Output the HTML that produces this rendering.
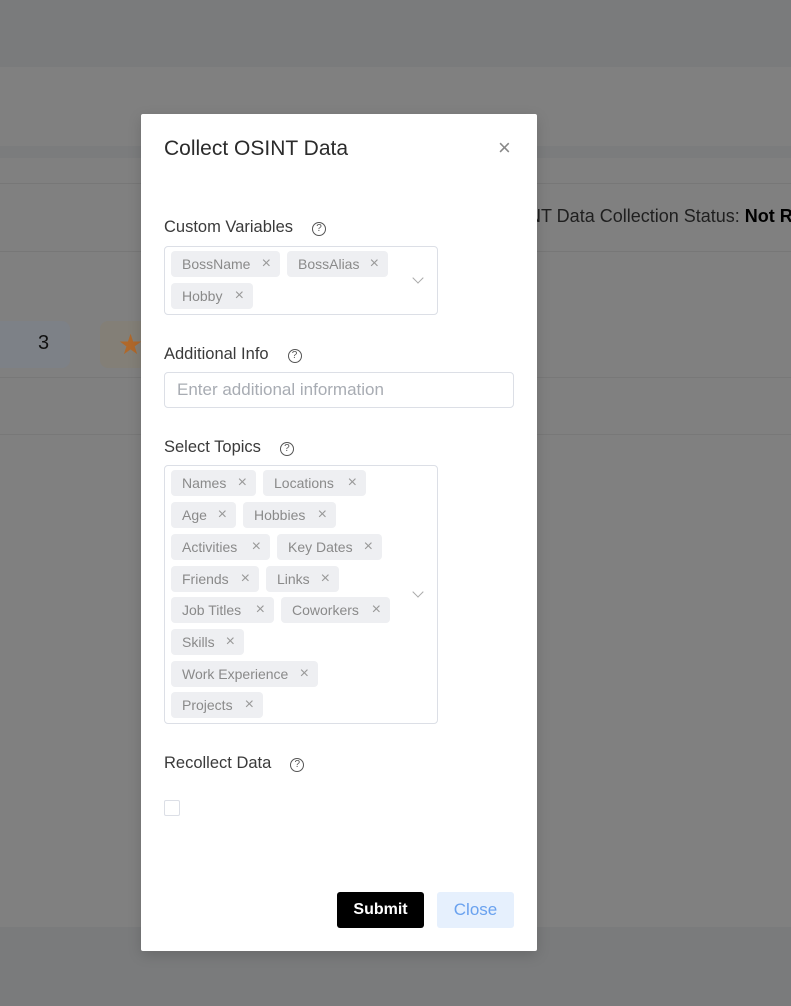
<!DOCTYPE html>
<html><head><meta charset="utf-8"><style>
*{box-sizing:border-box;margin:0;padding:0}
body{width:791px;height:1006px;position:relative;overflow:hidden;background:#808080;font-family:"Liberation Sans",Arial,sans-serif}
.a{position:absolute}
.tag{position:absolute;height:26px;background:#eeeff2;border-radius:4px;color:#8a8a8a;font-size:14px;line-height:26px;padding-left:11px;white-space:nowrap}
.tag i{position:absolute;right:9px;top:0;font-style:normal;font-size:16px;color:#999}
.lbl{position:absolute;left:164px;font-size:16.5px;color:#3a3a3a;white-space:nowrap}
.q{display:inline-block;width:14px;height:14px;border:1.2px solid #555;border-radius:50%;font-size:10px;line-height:12px;text-align:center;color:#555;margin-left:19px;vertical-align:1px}
.box{position:absolute;border:1px solid #dcdfe6;border-radius:4px;background:#fff}
.chev{position:absolute;width:8px;height:8px;border-right:1.2px solid #aaa;border-bottom:1.2px solid #aaa;transform:rotate(45deg)}
</style></head><body>
<div class="a" style="left:0;top:0;width:791px;height:67px;background:#7a7b7c"></div>
<div class="a" style="left:0;top:146px;width:791px;height:12px;background:#7b7c7d"></div>
<div class="a" style="left:0;top:183px;width:791px;height:1px;background:#777"></div>
<div class="a" style="left:0;top:251px;width:791px;height:1px;background:#777"></div>
<div class="a" style="left:0;top:377px;width:791px;height:1px;background:#787878"></div>
<div class="a" style="left:0;top:434px;width:791px;height:1px;background:#787878"></div>
<div class="a" style="left:0;top:927px;width:791px;height:79px;background:#7a7b7c"></div>
<div class="a" style="left:-10px;top:321px;width:80px;height:47px;background:#7d8187;border-radius:8px"></div>
<div class="a" style="left:38px;top:332px;font-size:20px;color:#111">3</div>
<div class="a" style="left:100px;top:321px;width:60px;height:47px;background:#837f77;border-radius:8px"></div>
<div class="a" style="left:118px;top:328px;font-size:28px;color:#b0682a">★</div>
<div class="a" style="left:497px;top:206px;font-size:18px;color:#1f1f1f;white-space:nowrap">OSINT Data Collection Status: <b style="color:#000">Not Run</b></div>

<div class="a" style="left:141px;top:114px;width:396px;height:837px;background:#fff;border-radius:2px;box-shadow:0 4px 14px rgba(0,0,0,.15)"></div>
<div class="a" style="left:164px;top:137px;font-size:21px;color:#2b2b2b">Collect OSINT Data</div>
<div class="a" style="left:498px;top:135px;font-size:22px;color:#888;font-weight:300">×</div>

<div class="lbl" style="top:218px">Custom Variables<span class="q">?</span></div>
<div class="box" style="left:164px;top:246px;width:274px;height:69px"></div>
<div class="tag" style="left:171px;top:251px;width:109px">BossName<i>×</i></div>
<div class="tag" style="left:287px;top:251px;width:101px">BossAlias<i>×</i></div>
<div class="tag" style="left:171px;top:283px;width:82px">Hobby<i>×</i></div>
<div class="chev" style="left:414px;top:274px"></div>

<div class="lbl" style="top:345px">Additional Info<span class="q">?</span></div>
<div class="box" style="left:164px;top:372px;width:350px;height:36px"></div>
<div class="a" style="left:177px;top:380px;font-size:17px;color:#a8acb3">Enter additional information</div>

<div class="lbl" style="top:438px">Select Topics<span class="q">?</span></div>
<div class="box" style="left:164px;top:465px;width:274px;height:259px"></div>
<div class="tag" style="left:171px;top:470px;width:85px">Names<i>×</i></div>
<div class="tag" style="left:263px;top:470px;width:103px">Locations<i>×</i></div>
<div class="tag" style="left:171px;top:502px;width:65px">Age<i>×</i></div>
<div class="tag" style="left:243px;top:502px;width:93px">Hobbies<i>×</i></div>
<div class="tag" style="left:171px;top:534px;width:99px">Activities<i>×</i></div>
<div class="tag" style="left:277px;top:534px;width:105px">Key Dates<i>×</i></div>
<div class="tag" style="left:171px;top:566px;width:88px">Friends<i>×</i></div>
<div class="tag" style="left:266px;top:566px;width:73px">Links<i>×</i></div>
<div class="tag" style="left:171px;top:597px;width:103px">Job Titles<i>×</i></div>
<div class="tag" style="left:281px;top:597px;width:109px">Coworkers<i>×</i></div>
<div class="tag" style="left:171px;top:629px;width:73px">Skills<i>×</i></div>
<div class="tag" style="left:171px;top:661px;width:147px">Work Experience<i>×</i></div>
<div class="tag" style="left:171px;top:692px;width:92px">Projects<i>×</i></div>
<div class="chev" style="left:414px;top:588px"></div>

<div class="lbl" style="top:754px">Recollect Data<span class="q">?</span></div>
<div class="a" style="left:164px;top:800px;width:16px;height:16px;border:1px solid #dcdfe6;border-radius:2px"></div>

<div class="a" style="left:337px;top:892px;width:87px;height:36px;background:#000;border-radius:3px;color:#fff;font-size:16px;font-weight:bold;text-align:center;line-height:36px">Submit</div>
<div class="a" style="left:437px;top:892px;width:77px;height:36px;background:#e6f0fd;border-radius:3px;color:#6aa2ef;font-size:17px;text-align:center;line-height:36px">Close</div>
</body></html>
